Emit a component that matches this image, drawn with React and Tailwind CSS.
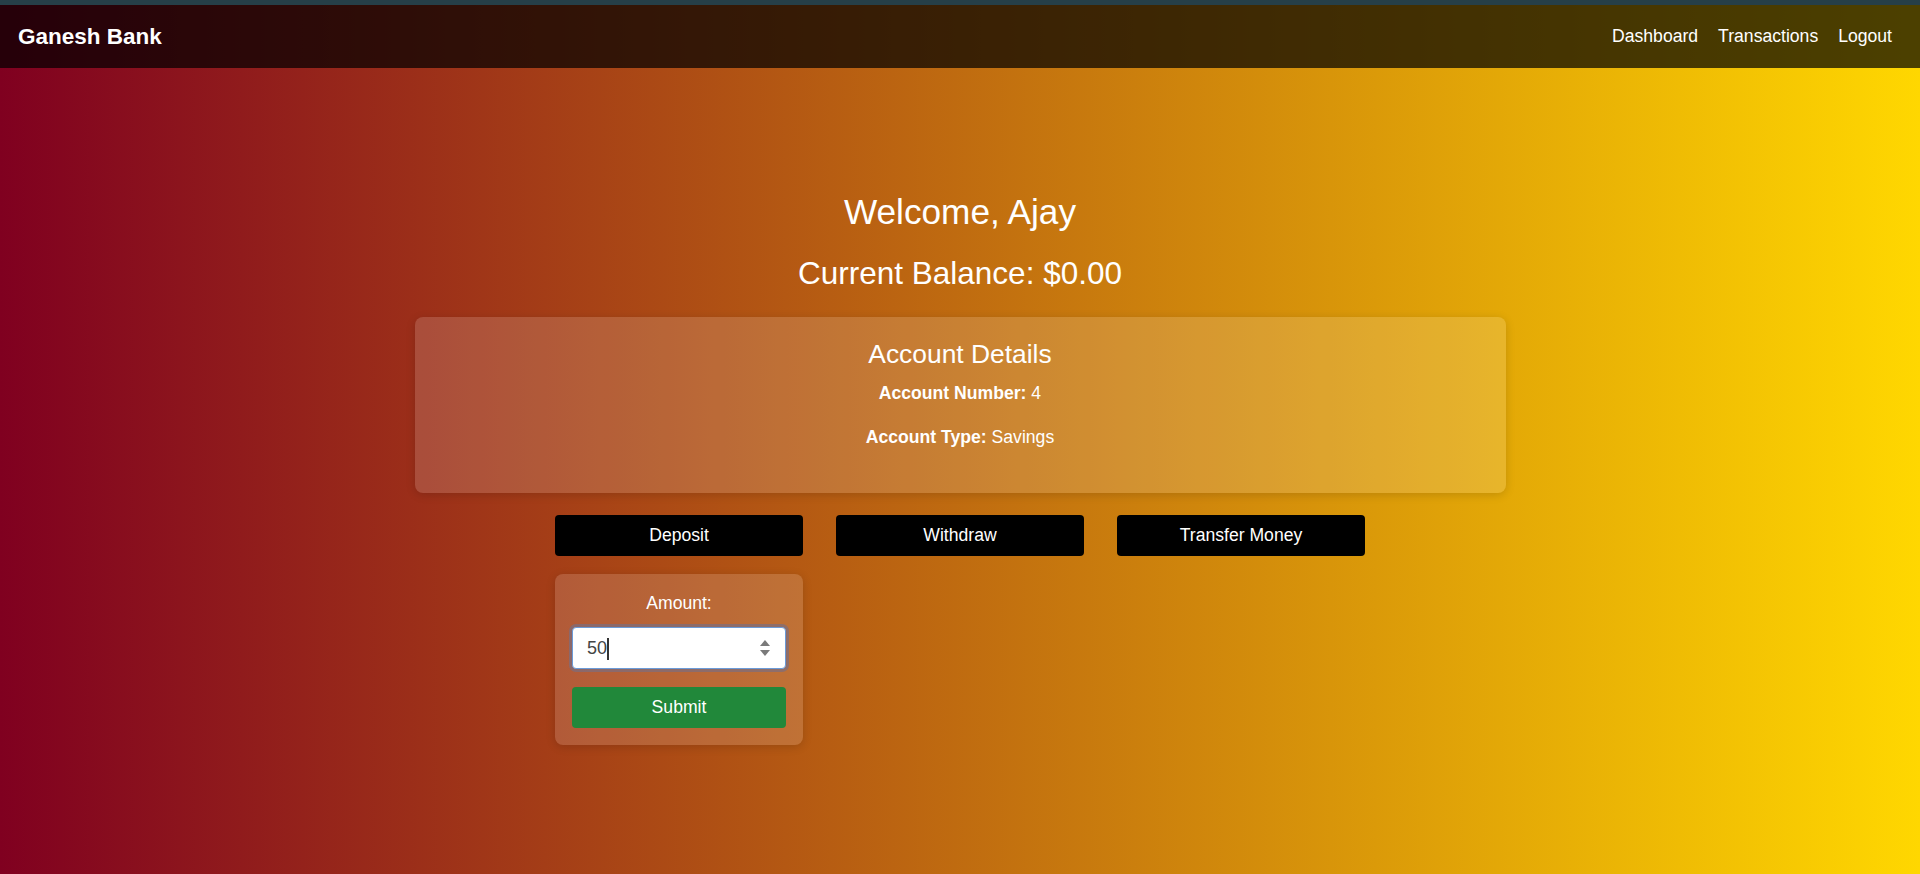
export default function App() {
  const font = { fontFamily: '"Liberation Sans", Arial, sans-serif' };

  return (
    <div
      className="min-h-[874px] w-full bg-[linear-gradient(to_right,#800020,#ffd700)] text-white text-[17.6px]"
      style={font}
    >
      {/* top strip */}
      <div className="h-[5px] bg-[#263f48]" />

      {/* NAVBAR */}
      <nav className="h-[63px] bg-black/70 flex items-center justify-between px-[18px]">
        <span className="text-[22.5px] font-bold">Ganesh Bank</span>
        <div className="flex items-center">
          <a className="mx-[10px]">Dashboard</a>
          <a className="mx-[10px]">Transactions</a>
          <a className="mx-[10px]">Logout</a>
        </div>
      </nav>

      {/* MAIN */}
      <main className="flex flex-col items-center pt-[123px]">
        <h1 className="text-[35.2px] leading-[42px]">Welcome, Ajay</h1>
        <h2 className="text-[31.5px] leading-[38px] mt-[21px]">Current Balance: $0.00</h2>

        {/* ACCOUNT DETAILS */}
        <section className="w-[1091px] mt-[25px] bg-white/15 rounded-[8px] shadow-[0_2px_10px_rgba(0,0,0,0.15)] flex flex-col items-center pt-[17px] pb-[43px]">
          <h3 className="text-[26.4px] leading-[40px]">Account Details</h3>
          <p className="leading-[26px] mt-[6px]">
            <b>Account Number:</b> 4
          </p>
          <p className="leading-[26px] mt-[18px]">
            <b>Account Type:</b> Savings
          </p>
        </section>

        {/* ACTIONS */}
        <div className="flex items-start gap-[33px] mt-[22px]">
          <div className="w-[248px] flex flex-col">
            <button className="h-[41px] bg-black rounded-[4px] text-white">Deposit</button>
            <form className="mt-[18px] bg-white/15 rounded-[8px] shadow-[0_2px_10px_rgba(0,0,0,0.15)] flex flex-col items-center px-[17px] pt-[19px] pb-[17px]">
              <label className="leading-[20px]">Amount:</label>
              <div className="mt-[14px] w-full h-[42px] bg-white rounded-[4px] border border-[#6b9bd8] ring-[3px] ring-[#7a6e80]/70 flex items-center pl-[14px] pr-[14px]">
                <span className="text-[#444] text-[18px] flex-1">
                  50<span className="inline-block w-[1.5px] h-[22px] bg-[#333] align-middle" />
                </span>
                <svg width="12" height="20" viewBox="0 0 12 20">
                  <path d="M6 2 L11 8 H1 Z" fill="#7a7a7a" />
                  <path d="M6 18 L11 12 H1 Z" fill="#7a7a7a" />
                </svg>
              </div>
              <button
                type="button"
                className="mt-[18px] w-full h-[41px] bg-[#21883a] rounded-[4px] text-white"
              >
                Submit
              </button>
            </form>
          </div>
          <div className="w-[248px]">
            <button className="w-full h-[41px] bg-black rounded-[4px] text-white">Withdraw</button>
          </div>
          <div className="w-[248px]">
            <button className="w-full h-[41px] bg-black rounded-[4px] text-white">Transfer Money</button>
          </div>
        </div>
      </main>
    </div>
  );
}
